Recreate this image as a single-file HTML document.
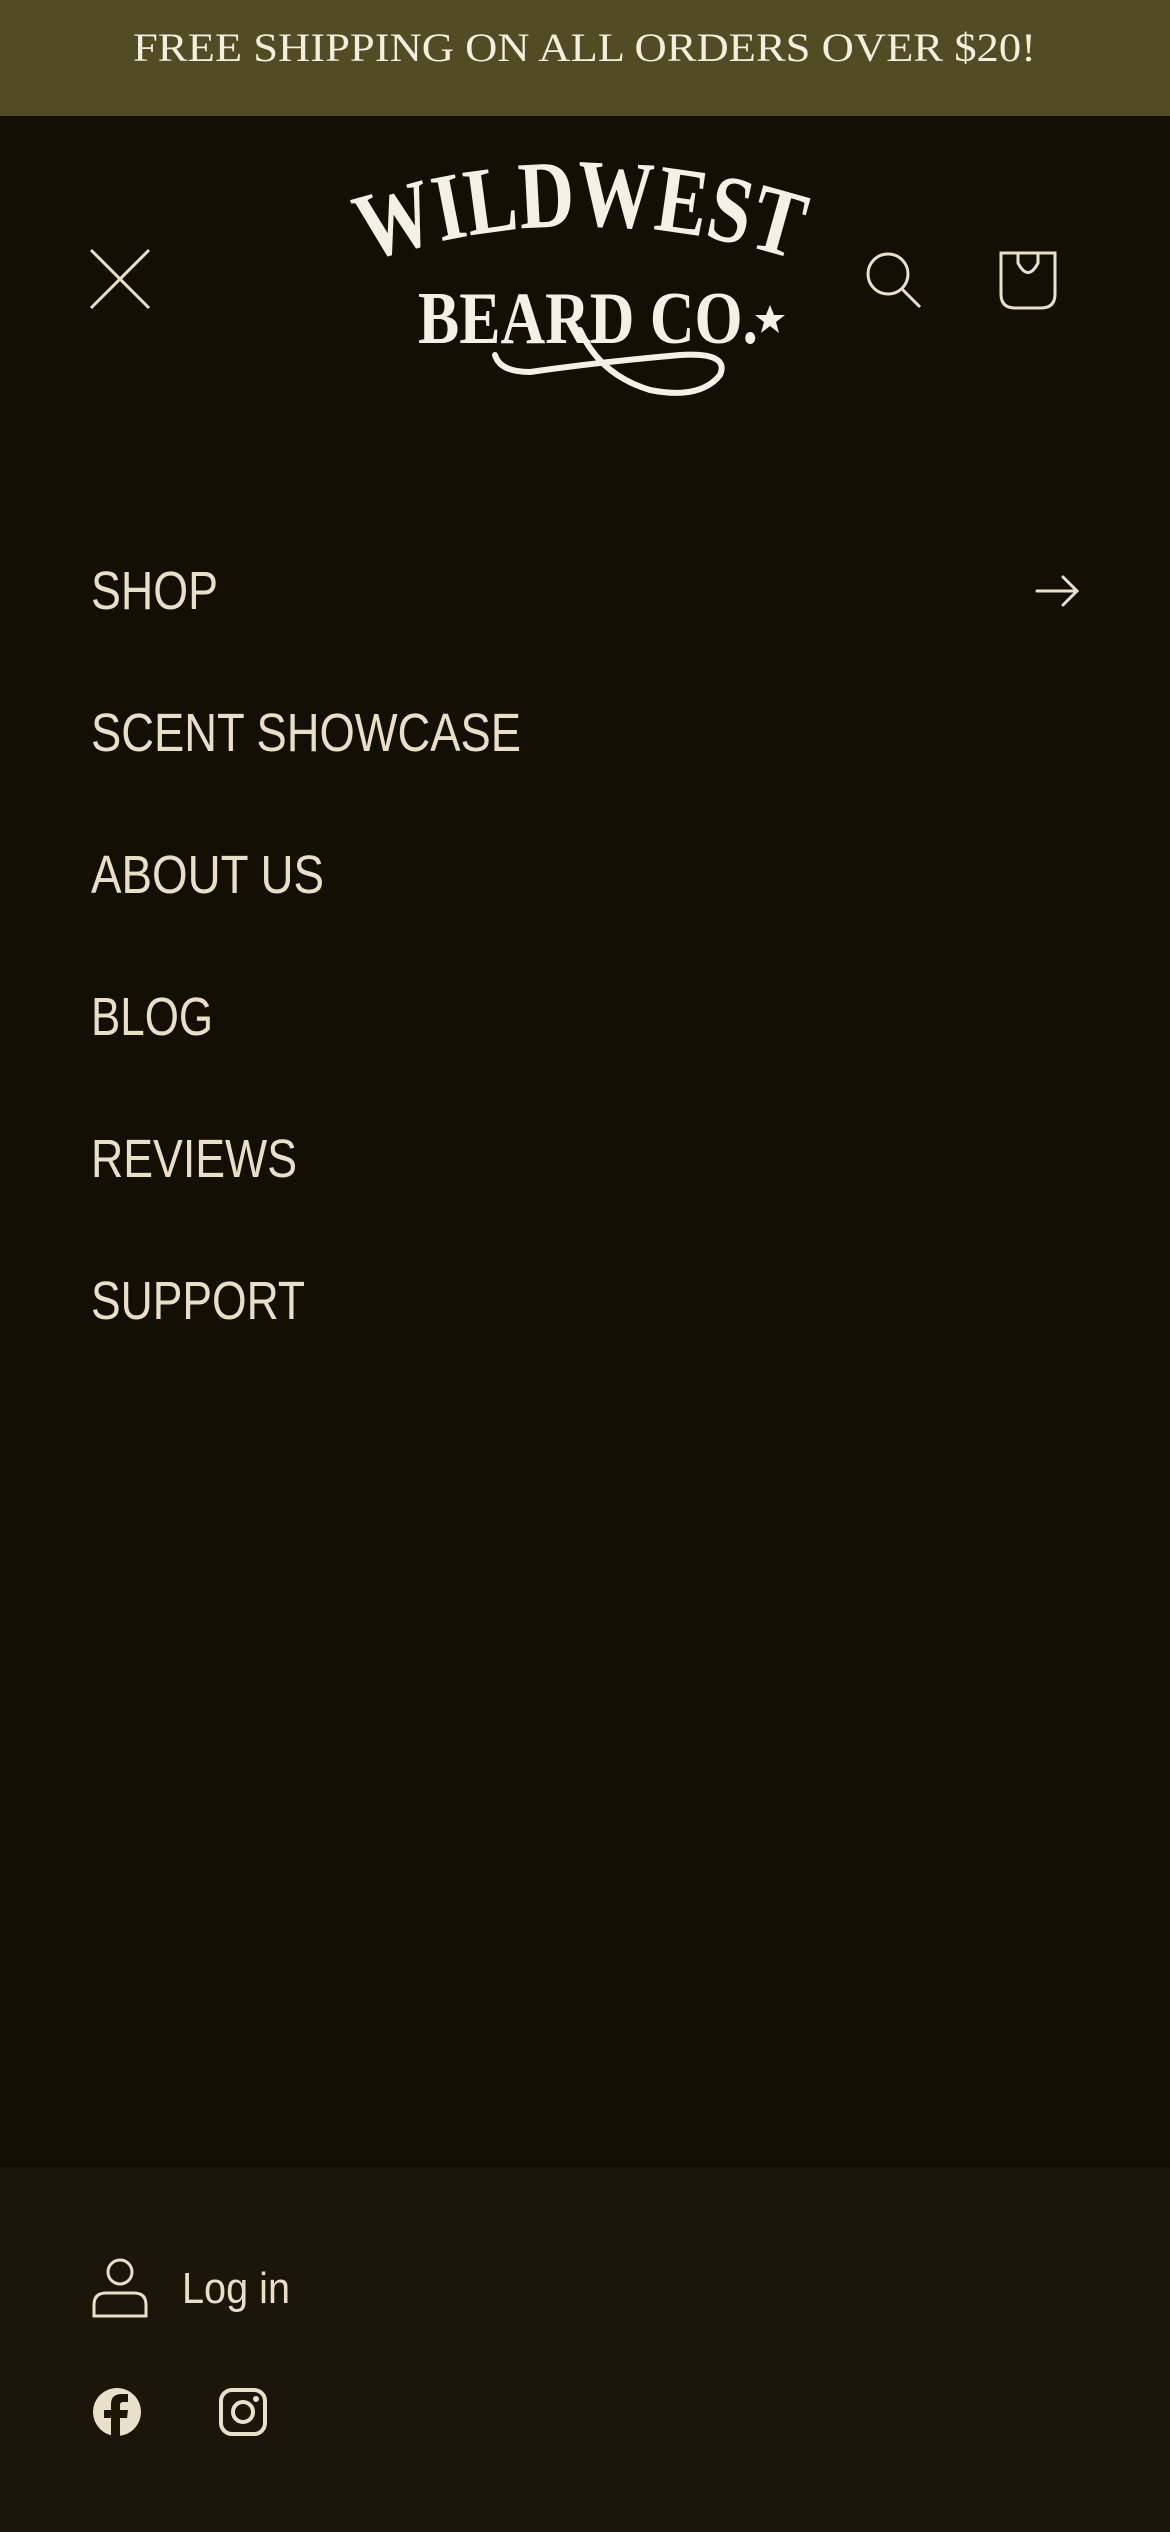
<!DOCTYPE html>
<html><head><meta charset="utf-8"><style>
html,body{margin:0;padding:0;background:#140f05;}
svg{display:block}
</style></head><body>
<svg width="1170" height="2532" viewBox="0 0 1170 2532" xmlns="http://www.w3.org/2000/svg">
<rect x="0" y="0" width="1170" height="2532" fill="#140f05"/>
<rect x="0" y="0" width="1170" height="116" fill="#524c24"/>
<rect x="0" y="2167" width="1170" height="365" fill="#1c160a"/>
<text x="133" y="61" font-family="Liberation Serif, serif" font-size="40" fill="#f3eedd" textLength="903" lengthAdjust="spacingAndGlyphs">FREE SHIPPING ON ALL ORDERS OVER $20!</text>

<path d="M91 250 L149 308 M149 250 L91 308" stroke="#e8e0c8" stroke-width="3" fill="none"/>
<circle cx="888" cy="274" r="20" stroke="#e8e0c8" stroke-width="3" fill="none"/>
<path d="M902 289 L920 307" stroke="#e8e0c8" stroke-width="3"/>
<path d="M1001 253 L1055 253 L1055 294 Q1055 308 1041 308 L1015 308 Q1001 308 1001 294 Z" stroke="#e8e0c8" stroke-width="3" fill="none"/>
<path d="M1018 253 L1018 263 Q1028 282 1038 263 L1038 253" stroke="#e8e0c8" stroke-width="3" fill="none"/>

<defs><path id="arc" d="M366 262 Q582 190 802 262"/></defs>
<text font-family="Liberation Serif, serif" font-weight="bold" font-size="96" fill="#f3f0e6"><textPath href="#arc" textLength="436" lengthAdjust="spacingAndGlyphs">WILDWEST</textPath></text>
<text x="418" y="343" font-family="Liberation Serif, serif" font-weight="bold" font-size="74" fill="#f3f0e6" textLength="340" lengthAdjust="spacingAndGlyphs">BEARD CO.</text>
<path d="M770 305 l4 10 11 0 -9 7 3 11 -9 -7 -9 7 3 -11 -9 -7 11 0 z" fill="#f3f0e6"/>
<path d="M495 355 Q500 372 530 372 Q600 362 680 355 Q730 352 720 375 Q700 400 650 390 Q600 375 580 330" stroke="#f3f0e6" stroke-width="6" fill="none" stroke-linecap="round"/>

<g font-family="Liberation Sans, sans-serif" font-size="54" fill="#e8dfc6">
<text x="91" y="609" textLength="127" lengthAdjust="spacingAndGlyphs">SHOP</text>
<text x="91" y="751" textLength="430" lengthAdjust="spacingAndGlyphs">SCENT SHOWCASE</text>
<text x="91" y="893" textLength="233" lengthAdjust="spacingAndGlyphs">ABOUT US</text>
<text x="91" y="1035" textLength="122" lengthAdjust="spacingAndGlyphs">BLOG</text>
<text x="91" y="1177" textLength="206" lengthAdjust="spacingAndGlyphs">REVIEWS</text>
<text x="91" y="1319" textLength="214" lengthAdjust="spacingAndGlyphs">SUPPORT</text>
</g>
<path d="M1037 591 L1077 591 M1063 577 L1077 591 L1063 605" stroke="#e8e0c8" stroke-width="3" fill="none" stroke-linecap="round"/>

<circle cx="120" cy="2272" r="12" stroke="#e8e0c8" stroke-width="3" fill="none"/>
<path d="M94 2316 L146 2316 L146 2305 Q146 2293 134 2293 L106 2293 Q94 2293 94 2305 Z" stroke="#e8e0c8" stroke-width="3" fill="none"/>
<text x="182" y="2303" font-family="Liberation Sans, sans-serif" font-size="44" fill="#e8dfc6" textLength="108" lengthAdjust="spacingAndGlyphs">Log in</text>
<circle cx="117" cy="2412" r="24" fill="#e8e0c8"/>
<path d="M111 2437 L111 2418 L104 2418 L104 2410 L111 2410 L111 2404 Q111 2394 122 2394 L128 2394 L128 2402 L123 2402 Q120 2402 120 2405 L120 2410 L128 2410 L127 2418 L120 2418 L120 2437 Z" fill="#1c160a"/>
<rect x="221" y="2390" width="44" height="44" rx="11" stroke="#e8e0c8" stroke-width="4" fill="none"/>
<circle cx="243" cy="2412" r="10" stroke="#e8e0c8" stroke-width="4" fill="none"/>
<circle cx="256" cy="2399" r="3" fill="#e8e0c8"/>
</svg>
</body></html>
